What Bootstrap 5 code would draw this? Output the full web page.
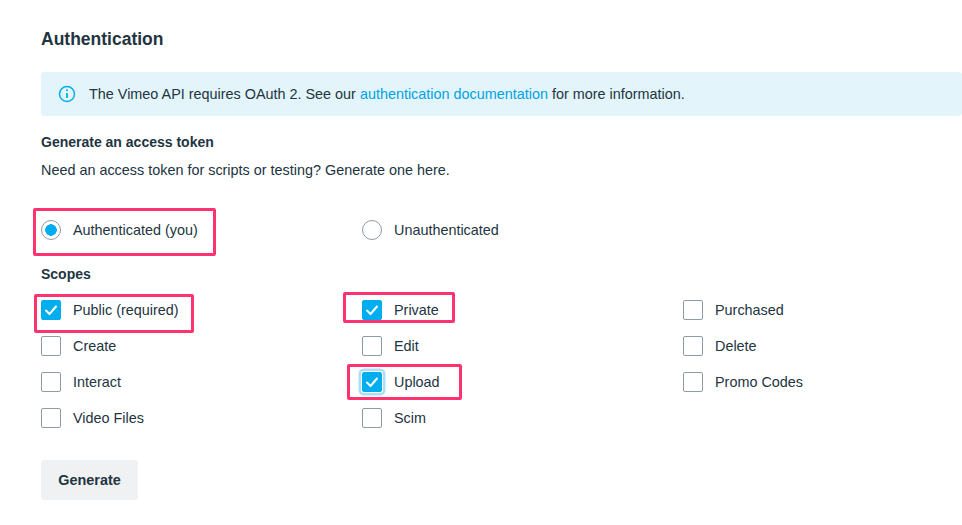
<!DOCTYPE html>
<html lang="en">
<head>
    <meta charset="UTF-8">
    <meta name="viewport" content="width=device-width, initial-scale=1">
    <title>Authentication</title>
    <link href="https://cdn.jsdelivr.net/npm/bootstrap@5.3.0/dist/css/bootstrap.min.css" rel="stylesheet">
    <style>
        html, body { overflow: hidden; }
        body { font-family: "Liberation Sans", Arial, sans-serif; font-size: 14.4px; color: #22343f; background: #fff; }
        .page-wrap { position: relative; padding: 29px 0 0 41px; height: 525px; }
        .page-title { font-size: 17.5px; font-weight: 600; line-height: 20px; margin: 0 0 23px; color: #22343f; }
        .info-box { background: #e3f4fb; border-radius: 3px; height: 44px; padding: 0 0 0 17px; gap: 13px; margin-bottom: 16px; }
        .info-box span { padding-top: 2px; }
        .info-box a { color: #00a3e3; text-decoration: none; }
        .sub-title { font-size: 14px; font-weight: 600; line-height: 20px; margin: 0 0 8px; }
        .sub-text { line-height: 20px; margin: 0 0 40px; }
        .scope-grid { display: grid; grid-template-columns: 321px 321px 1fr; grid-auto-rows: 36px; }
        .type-row { height: 20px; margin-bottom: 24px; }
        .scope-title { font-size: 14px; font-weight: 600; line-height: 20px; margin: 0 0 16px; }
        .opt { display: flex; align-items: center; gap: 12px; height: 20px; margin: 0; line-height: 20px; }
        .opt .form-check-input { width: 20px; height: 20px; margin: 0; flex: none; border: 1px solid #8d9ba6; background-color: #fff; box-shadow: none; }
        .opt .form-check-input[type=checkbox] { border-radius: 2px; }
        .opt .form-check-input:checked[type=checkbox] { background-color: #00adef; border-color: #00adef; background-size: 20px 20px; background-image: url("data:image/svg+xml,%3csvg xmlns='http://www.w3.org/2000/svg' viewBox='0 0 20 20'%3e%3cpath fill='none' stroke='%23fff' stroke-width='2' stroke-linecap='round' stroke-linejoin='round' d='M5 10.5l3.5 3.5L15 6.5'/%3e%3c/svg%3e"); }
        .opt .form-check-input:checked[type=radio] { border-color: #8d9ba6; background-image: radial-gradient(circle, #00adef 0, #00adef 5.5px, #fff 6px); }
        .opt .form-check-input.is-focused { box-shadow: 0 0 0 1px #fff, 0 0 0 3.5px #a8e0f8; }
        .gen-btn { background: #eff1f3; color: #22343f; font-size: 14.4px; font-weight: 600; width: 97px; height: 40px; border: 0; border-radius: 3px; margin-top: 16px; padding: 2px 0 0; }
        .mark-box { position: absolute; border: 3px solid #ff3370; border-radius: 2px; pointer-events: none; }
        .mark-radio { left: 33px; top: 208px; width: 183px; height: 48px; }
        .mark-public { left: 34px; top: 294px; width: 160px; height: 39px; }
        .mark-private { left: 343px; top: 292px; width: 112px; height: 31px; }
        .mark-upload { left: 347px; top: 364px; width: 115px; height: 36px; }
    </style>
</head>
<body>
    <div class="page-wrap">
        <h1 class="page-title">Authentication</h1>

        <div class="info-box d-flex align-items-center">
            <svg width="18" height="18" viewBox="0 0 18 18" fill="none" stroke="#00adef" stroke-width="1.5">
                <circle cx="9" cy="9" r="7.5"/>
                <path d="M9 8v5" stroke-width="1.8"/>
                <circle cx="9" cy="5.3" r="1" fill="#00adef" stroke="none"/>
            </svg>
            <span>The Vimeo API requires OAuth 2. See our <a href="#">authentication documentation</a> for more information.</span>
        </div>

        <h2 class="sub-title">Generate an access token</h2>
        <p class="sub-text">Need an access token for scripts or testing? Generate one here.</p>

        <!-- Tipo de token -->
        <div class="scope-grid type-row">
            <label class="opt"><input class="form-check-input" type="radio" name="auth" checked>Authenticated (you)</label>
            <label class="opt"><input class="form-check-input" type="radio" name="auth">Unauthenticated</label>
        </div>

        <div class="scope-title">Scopes</div>
        <div class="scope-grid">
            <label class="opt"><input class="form-check-input" type="checkbox" checked>Public (required)</label>
            <label class="opt"><input class="form-check-input" type="checkbox" checked>Private</label>
            <label class="opt"><input class="form-check-input" type="checkbox">Purchased</label>
            <label class="opt"><input class="form-check-input" type="checkbox">Create</label>
            <label class="opt"><input class="form-check-input" type="checkbox">Edit</label>
            <label class="opt"><input class="form-check-input" type="checkbox">Delete</label>
            <label class="opt"><input class="form-check-input" type="checkbox">Interact</label>
            <label class="opt"><input class="form-check-input is-focused" type="checkbox" checked>Upload</label>
            <label class="opt"><input class="form-check-input" type="checkbox">Promo Codes</label>
            <label class="opt"><input class="form-check-input" type="checkbox">Video Files</label>
            <label class="opt"><input class="form-check-input" type="checkbox">Scim</label>
        </div>

        <button type="button" class="btn gen-btn">Generate</button>

        <!-- Marcas rosas encima del contenido -->
        <div class="mark-box mark-radio"></div>
        <div class="mark-box mark-public"></div>
        <div class="mark-box mark-private"></div>
        <div class="mark-box mark-upload"></div>
    </div>

    <script src="https://cdn.jsdelivr.net/npm/bootstrap@5.3.0/dist/js/bootstrap.bundle.min.js"></script>
</body>
</html>
